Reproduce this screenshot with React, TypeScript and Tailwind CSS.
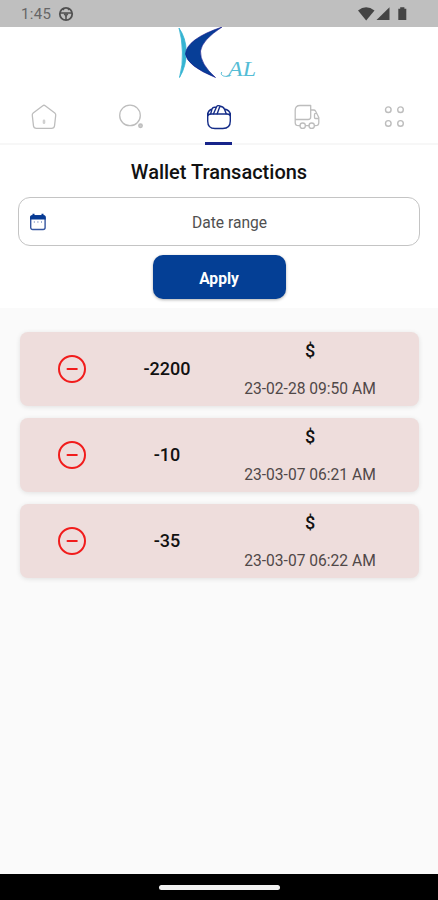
import React from 'react';

const transactions = [
  { amount: '-2200', date: '23-02-28 09:50 AM' },
  { amount: '-10', date: '23-03-07 06:21 AM' },
  { amount: '-35', date: '23-03-07 06:22 AM' },
];

function StatusBar() {
  return (
    <div className="flex h-[27px] shrink-0 items-center bg-[#bfbfbf] pr-[29px] pl-[21px] text-[#666]">
      <span className="pt-[2px] text-[15px] leading-none tracking-[0.3px]">1:45</span>
      <svg className="mt-[1px] ml-[7px]" width="16" height="16" viewBox="0 0 16 16" fill="none" stroke="#505050" strokeWidth="1.8">
        <circle cx="8" cy="8" r="6.2" />
        <path d="M2 7h12M8 8v6" strokeWidth="1.5" />
        <path d="M6 8h4L8 10.5Z" strokeWidth="1" />
        <path d="M4.5 2.5L6 4M11.5 2.5L10 4" strokeWidth="1.2" />
      </svg>
      <svg className="ml-auto" width="52" height="16" viewBox="0 0 52 16" fill="#444">
        <path d="M1 4.5Q9 -1.8 17.5 4.5L9.2 14.5Z" />
        <path d="M32.5 1.3V14H19.5Z" />
        <path d="M41.3 2.8H43.2V1.2h4.2v1.6h1.9V14h-8Z" />
      </svg>
    </div>
  );
}

function Logo() {
  return (
    <div className="flex h-[63px] shrink-0 justify-center">
      <svg width="120" height="60" viewBox="160 27 120 60">
        <path d="M180 28Q187 38 187.3 51.5Q187.5 66 180.5 77.5Q184 65 183.4 52Q183 38 180 28Z" fill="#35b4d2" stroke="#35b4d2" strokeWidth=".8" />
        <path d="M223 27Q203 40 201.5 51Q201 64 216.5 77.5Q188 66 186.5 54Q187.5 39 223 27Z" fill="#073e97" stroke="#10108a" strokeWidth=".6" />
        <text x="229" y="76.3" fontFamily="'Liberation Serif', serif" fontStyle="italic" fontSize="20" textLength="28" lengthAdjust="spacingAndGlyphs" fill="#55bdd6">AL</text>
        <path d="M231 75.8C226 77.5 220.5 75.5 222.8 72" fill="none" stroke="#55bdd6" strokeWidth="1" />
      </svg>
    </div>
  );
}

function HomeIcon() {
  return (
    <svg width="28" height="28" viewBox="0 0 28 28" fill="none" stroke="#bdbdbd" strokeWidth="1.3" strokeLinejoin="round">
      <path d="M12.8 2.7Q14 1.8 15.2 2.7L24.8 10Q26 11 25.7 12.5L24.5 23Q24.2 25.3 21.5 25.3H6.5Q3.8 25.3 3.5 23L2.3 12.5Q2 11 3.2 10Z" />
      <path d="M14 17.8v2" strokeWidth="2.6" stroke="#d0d0d0" strokeLinecap="round" />
    </svg>
  );
}

function SearchIcon() {
  return (
    <svg width="28" height="28" viewBox="0 0 28 28" fill="none" stroke="#bdbdbd" strokeWidth="1.3">
      <circle cx="13" cy="12.4" r="10.3" />
      <circle cx="23.5" cy="22.8" r="1.8" fill="#ccc" />
    </svg>
  );
}

function WalletIcon() {
  return (
    <svg width="28" height="28" viewBox="0 0 28 28" fill="none" stroke="#142c88" strokeWidth="1.4" strokeLinecap="round" strokeLinejoin="round">
      <path d="M2.7 15.5V10.5M25.3 10.5V18Q25.3 25.5 17.8 25.5H10Q2.7 25.5 2.7 18V13.5Q2.7 11 6 11H22Q25.3 11 25.3 13.5" />
      <path d="M2.7 11.5Q3 7.5 7 6L5.7 10.8M8.5 10.8L11.5 4Q12.5 1.8 15 3L12.2 10.8M7 6Q7.8 3.8 10.8 4.3M14.8 3.2Q18.5 3.3 19.5 6.2L21.2 10.8M19.3 6Q24.8 7 25.3 11.5" />
    </svg>
  );
}

function TruckIcon() {
  return (
    <svg width="28" height="28" viewBox="0 0 28 28" fill="none" stroke="#bdbdbd" strokeWidth="1.3" strokeLinejoin="round" strokeLinecap="round">
      <path d="M7 2.5H17.7V14Q17.7 16.5 15 16.5H2.2V7.2Q2.2 2.5 7 2.5ZM2.2 16.5V19.5Q2.2 22.7 5.5 22.7H7M12.5 22.7H16M21.5 22.7H22.5Q25.8 22.7 25.8 19.5V14.5L22.5 8Q22 7 20.5 7H17.7M25.8 15.5H22.5Q21.5 15.5 21.5 14.5V11.5Q21.5 10.3 23.3 10" />
      <circle cx="9.7" cy="22.7" r="2.7" />
      <circle cx="18.7" cy="22.7" r="2.7" />
    </svg>
  );
}

function MoreIcon() {
  return (
    <svg width="28" height="28" viewBox="0 0 28 28" fill="none" stroke="#bdbdbd" strokeWidth="1.4">
      <circle cx="8.3" cy="6.7" r="2.8" />
      <circle cx="20.5" cy="6.7" r="2.8" />
      <circle cx="8.3" cy="20.4" r="2.8" />
      <circle cx="20.5" cy="20.4" r="2.8" />
    </svg>
  );
}

function CalendarIcon() {
  return (
    <svg width="18" height="18" viewBox="0 0 18 18" fill="none">
      <rect x="1.7" y="2.7" width="14.4" height="13.8" rx="2" stroke="#3556a0" strokeWidth="1.4" />
      <path d="M1 6.5V4.5Q1 2.2 3.5 2.2V.7h2v1.5h7V.7h2v1.5q2.2 0 2.2 2.3v2Z" fill="#073b94" />
      <path d="M4.8 9h1M8.4 9h1M12 9h1" stroke="#8396c5" strokeWidth="1.5" />
    </svg>
  );
}

export default function App() {
  const tabs = [HomeIcon, SearchIcon, WalletIcon, TruckIcon, MoreIcon];
  return (
    <div className="flex h-[900px] w-[438px] flex-col overflow-hidden bg-[#fafafa] font-[Roboto,sans-serif] text-[#111]">
      <StatusBar />
      <div className="flex h-[281px] shrink-0 flex-col bg-white">
        <Logo />
        <nav className="grid h-[55px] shrink-0 grid-cols-5 border-b-2 border-[#f7f7f7]">
          {tabs.map((Icon, i) => (
            <div key={i} className="flex flex-col items-center pt-[13px]">
              <Icon />
              {i === 2 && <div className="mt-[11px] h-[3px] w-[27px] shrink-0 bg-[#17248a]" />}
            </div>
          ))}
        </nav>
        <h1 className="mt-[15px] text-center text-[20px] leading-6 font-medium">Wallet Transactions</h1>
        <div className="mx-[18px] mt-[13px] flex h-[49px] shrink-0 items-center rounded-[12px] border border-[#c4c4c4] px-[10px]">
          <CalendarIcon />
          <span className="flex-1 pt-[3px] pl-[3px] text-center text-[15.6px] leading-5 text-[#505050]">Date range</span>
        </div>
        <button className="mx-auto mt-[9px] h-[44px] w-[133px] shrink-0 rounded-[10px] bg-[#043f95] pt-[3px] text-[15.6px] leading-5 font-bold text-white shadow-[0_1px_3px_#00000050]">Apply</button>
      </div>
      <main className="flex flex-1 flex-col gap-3 pt-[24px] pr-[19px] pl-[20px]">
        {transactions.map((t) => (
          <div key={t.date} className="flex h-[74px] items-center rounded-[8px] bg-[#eedddc] shadow-[0_1px_5px_#0000001a]">
            <div className="flex w-[103px] justify-center">
              <svg width="30" height="30" viewBox="0 0 30 30" fill="none" stroke="#f11c1c" strokeWidth="2">
                <circle cx="15" cy="15" r="13" />
                <path d="M10.5 15h9.3" strokeLinecap="round" />
              </svg>
            </div>
            <div className="w-[88px] pb-[2px] text-center text-[18px] font-medium">{t.amount}</div>
            <div className="flex h-full w-[198px] flex-col items-center pt-[8px]">
              <span className="text-[18px] leading-[22px] font-medium">$</span>
              <span className="mt-[17px] text-[15.6px] leading-5 text-[#504848]">{t.date}</span>
            </div>
          </div>
        ))}
      </main>
      <footer className="flex h-[26px] shrink-0 items-center justify-center bg-black">
        <div className="h-[5px] w-[121px] rounded-full bg-[#f2f2f2]" />
      </footer>
    </div>
  );
}
